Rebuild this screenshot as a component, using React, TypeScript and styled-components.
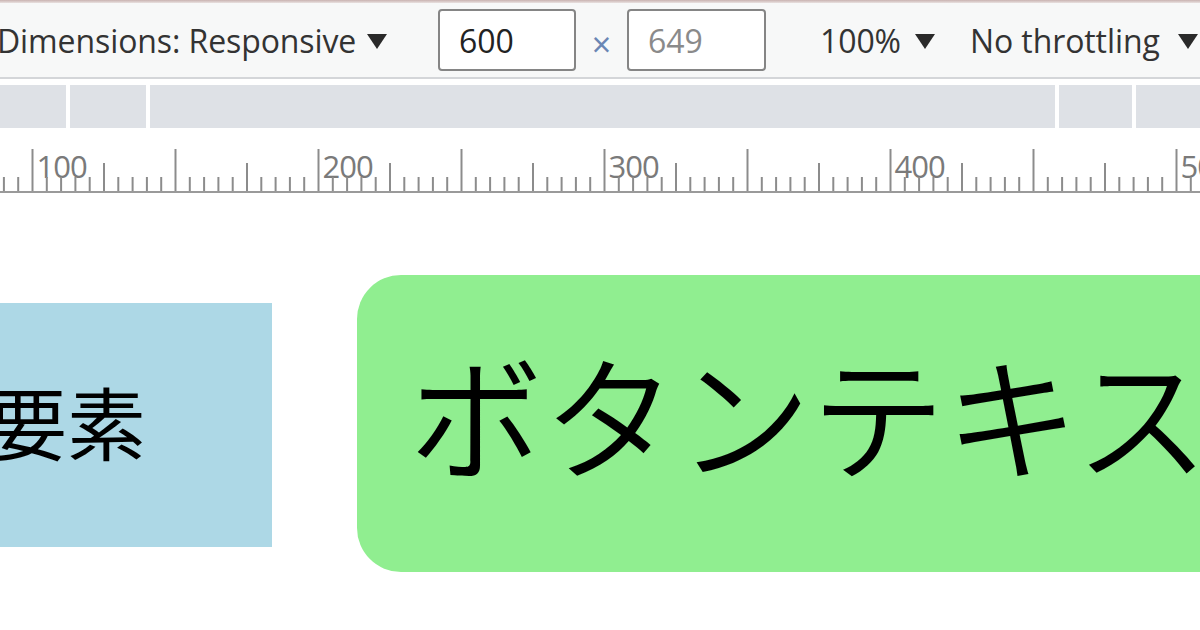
import React from 'react';
import styled, { createGlobalStyle } from 'styled-components';

const GlobalStyle = createGlobalStyle`
    html, body {
        margin: 0;
        padding: 0;
        background: #ffffff;
        overflow: hidden;
    }
`;

const UI_FONT = `'Open Sans', 'Noto Sans', 'Liberation Sans', sans-serif`;
const JP_FONT = `'Noto Sans CJK JP', 'Noto Sans', sans-serif`;

// ruler scale: px per css unit in the zoomed screenshot
const PX_PER_UNIT = 2.86;
const RULER_ORIGIN = 32.5 - 100 * PX_PER_UNIT;

const Frame = styled.div`
    width: 1200px;
    height: 630px;
    overflow: hidden;
    display: flex;
    flex-direction: column;
    background: #ffffff;
`;

const TopEdge = styled.div`
    height: 3px;
    flex: none;
    background: linear-gradient(#c9b3b1, #e9e1e0);
`;

const Toolbar = styled.div`
    height: 74px;
    flex: none;
    display: grid;
    grid-template-columns: 441px 138px 51px 139px 54px 150px 1fr;
    align-items: center;
    margin-left: -3px;
    background: #f7f8f8;
    border-bottom: 2px solid #d4d6d9;
    font-family: ${UI_FONT};
    color: #333333;
    white-space: nowrap;
`;

const Dropdown = styled.div<{ $gap: number }>`
    display: flex;
    align-items: center;
    gap: ${(p) => p.$gap}px;
    font-size: 32px;
    letter-spacing: -0.1px;
`;

const Arrow = styled.span`
    width: 0;
    height: 0;
    border-left: 10px solid transparent;
    border-right: 10px solid transparent;
    border-top: 15px solid #2a2a2a;
    margin-top: 2px;
`;

const SizeInput = styled.div<{ $muted?: boolean }>`
    height: 62px;
    box-sizing: border-box;
    display: flex;
    align-items: center;
    padding-left: 19px;
    background: #ffffff;
    border: 2px solid #858585;
    border-radius: 4px;
    font-size: 32px;
    color: ${(p) => (p.$muted ? '#8a8a8a' : '#222222')};
`;

const Times = styled.div`
    display: flex;
    justify-content: center;
    padding-top: 8px;
    font-size: 34px;
    color: #6a86b4;
`;

const MediaBar = styled.div`
    height: 43px;
    flex: none;
    margin-top: 6px;
    display: grid;
    grid-template-columns: 66px 76px 905px 73px 1fr;
    column-gap: 4px;
    background: #ffffff;
`;

const MediaSegment = styled.div`
    background: #dee1e6;
`;

const RulerBox = styled.div`
    height: 64px;
    flex: none;
    margin-top: 1px;
`;

const Stage = styled.div`
    flex: none;
    display: flex;
    align-items: center;
    height: 297px;
    margin-top: 82px;
    font-family: ${JP_FONT};
    color: #000000;
    white-space: nowrap;
`;

const BlockBox = styled.div`
    width: 284px;
    height: 244px;
    margin-left: -12px;
    margin-top: 3px;
    flex: none;
    box-sizing: border-box;
    display: flex;
    align-items: center;
    padding-bottom: 10px;
    background: #add8e6;
    font-size: 79px;
    line-height: 1;
`;

const ButtonBox = styled.div`
    height: 297px;
    width: 1100px;
    margin-left: 85px;
    flex: none;
    box-sizing: border-box;
    display: flex;
    align-items: center;
    padding-left: 52px;
    padding-bottom: 24px;
    background: #90ee90;
    border-radius: 44px;
    font-size: 134px;
    font-weight: 350;
    line-height: 1;
`;

const Ruler: React.FC = () => {
    const ticks: React.ReactNode[] = [];
    for (let u = 90; u <= 520; u += 5) {
        const x = RULER_ORIGIN + u * PX_PER_UNIT;
        let top = 48;
        if (u % 50 === 0) top = 20;
        else if (u % 25 === 0) top = 34;
        ticks.push(<line key={u} x1={x} x2={x} y1={top} y2={63} stroke="#8c8c8c" strokeWidth={2} />);
        if (u % 100 === 0) {
            ticks.push(
                <text key={`l${u}`} x={x + 4} y={49} fontSize={31} fill="#7a7a7a" fontFamily={UI_FONT} letterSpacing={-1}>
                    {u}
                </text>
            );
        }
    }
    return (
        <svg width={1200} height={64} viewBox="0 0 1200 64" style={{ display: 'block' }}>
            <rect x={0} y={0} width={1200} height={64} fill="#ffffff" />
            {ticks}
            <line x1={0} x2={1200} y1={63} y2={63} stroke="#9a9a9a" strokeWidth={2} />
        </svg>
    );
};

const App: React.FC = () => {
    return (
        <Frame>
            <GlobalStyle />
            <TopEdge />
            <Toolbar>
                <Dropdown $gap={11}>
                    <span>Dimensions: Responsive</span>
                    <Arrow />
                </Dropdown>
                <SizeInput>600</SizeInput>
                <Times>×</Times>
                <SizeInput $muted>649</SizeInput>
                <span />
                <Dropdown $gap={14}>
                    <span>100%</span>
                    <Arrow />
                </Dropdown>
                <Dropdown $gap={18}>
                    <span>No throttling</span>
                    <Arrow />
                </Dropdown>
            </Toolbar>
            <MediaBar>
                <MediaSegment />
                <MediaSegment />
                <MediaSegment />
                <MediaSegment />
                <MediaSegment />
            </MediaBar>
            <RulerBox>
                <Ruler />
            </RulerBox>
            <Stage>
                <BlockBox>要素</BlockBox>
                <ButtonBox>ボタンテキスト</ButtonBox>
            </Stage>
        </Frame>
    );
};

export default App;
